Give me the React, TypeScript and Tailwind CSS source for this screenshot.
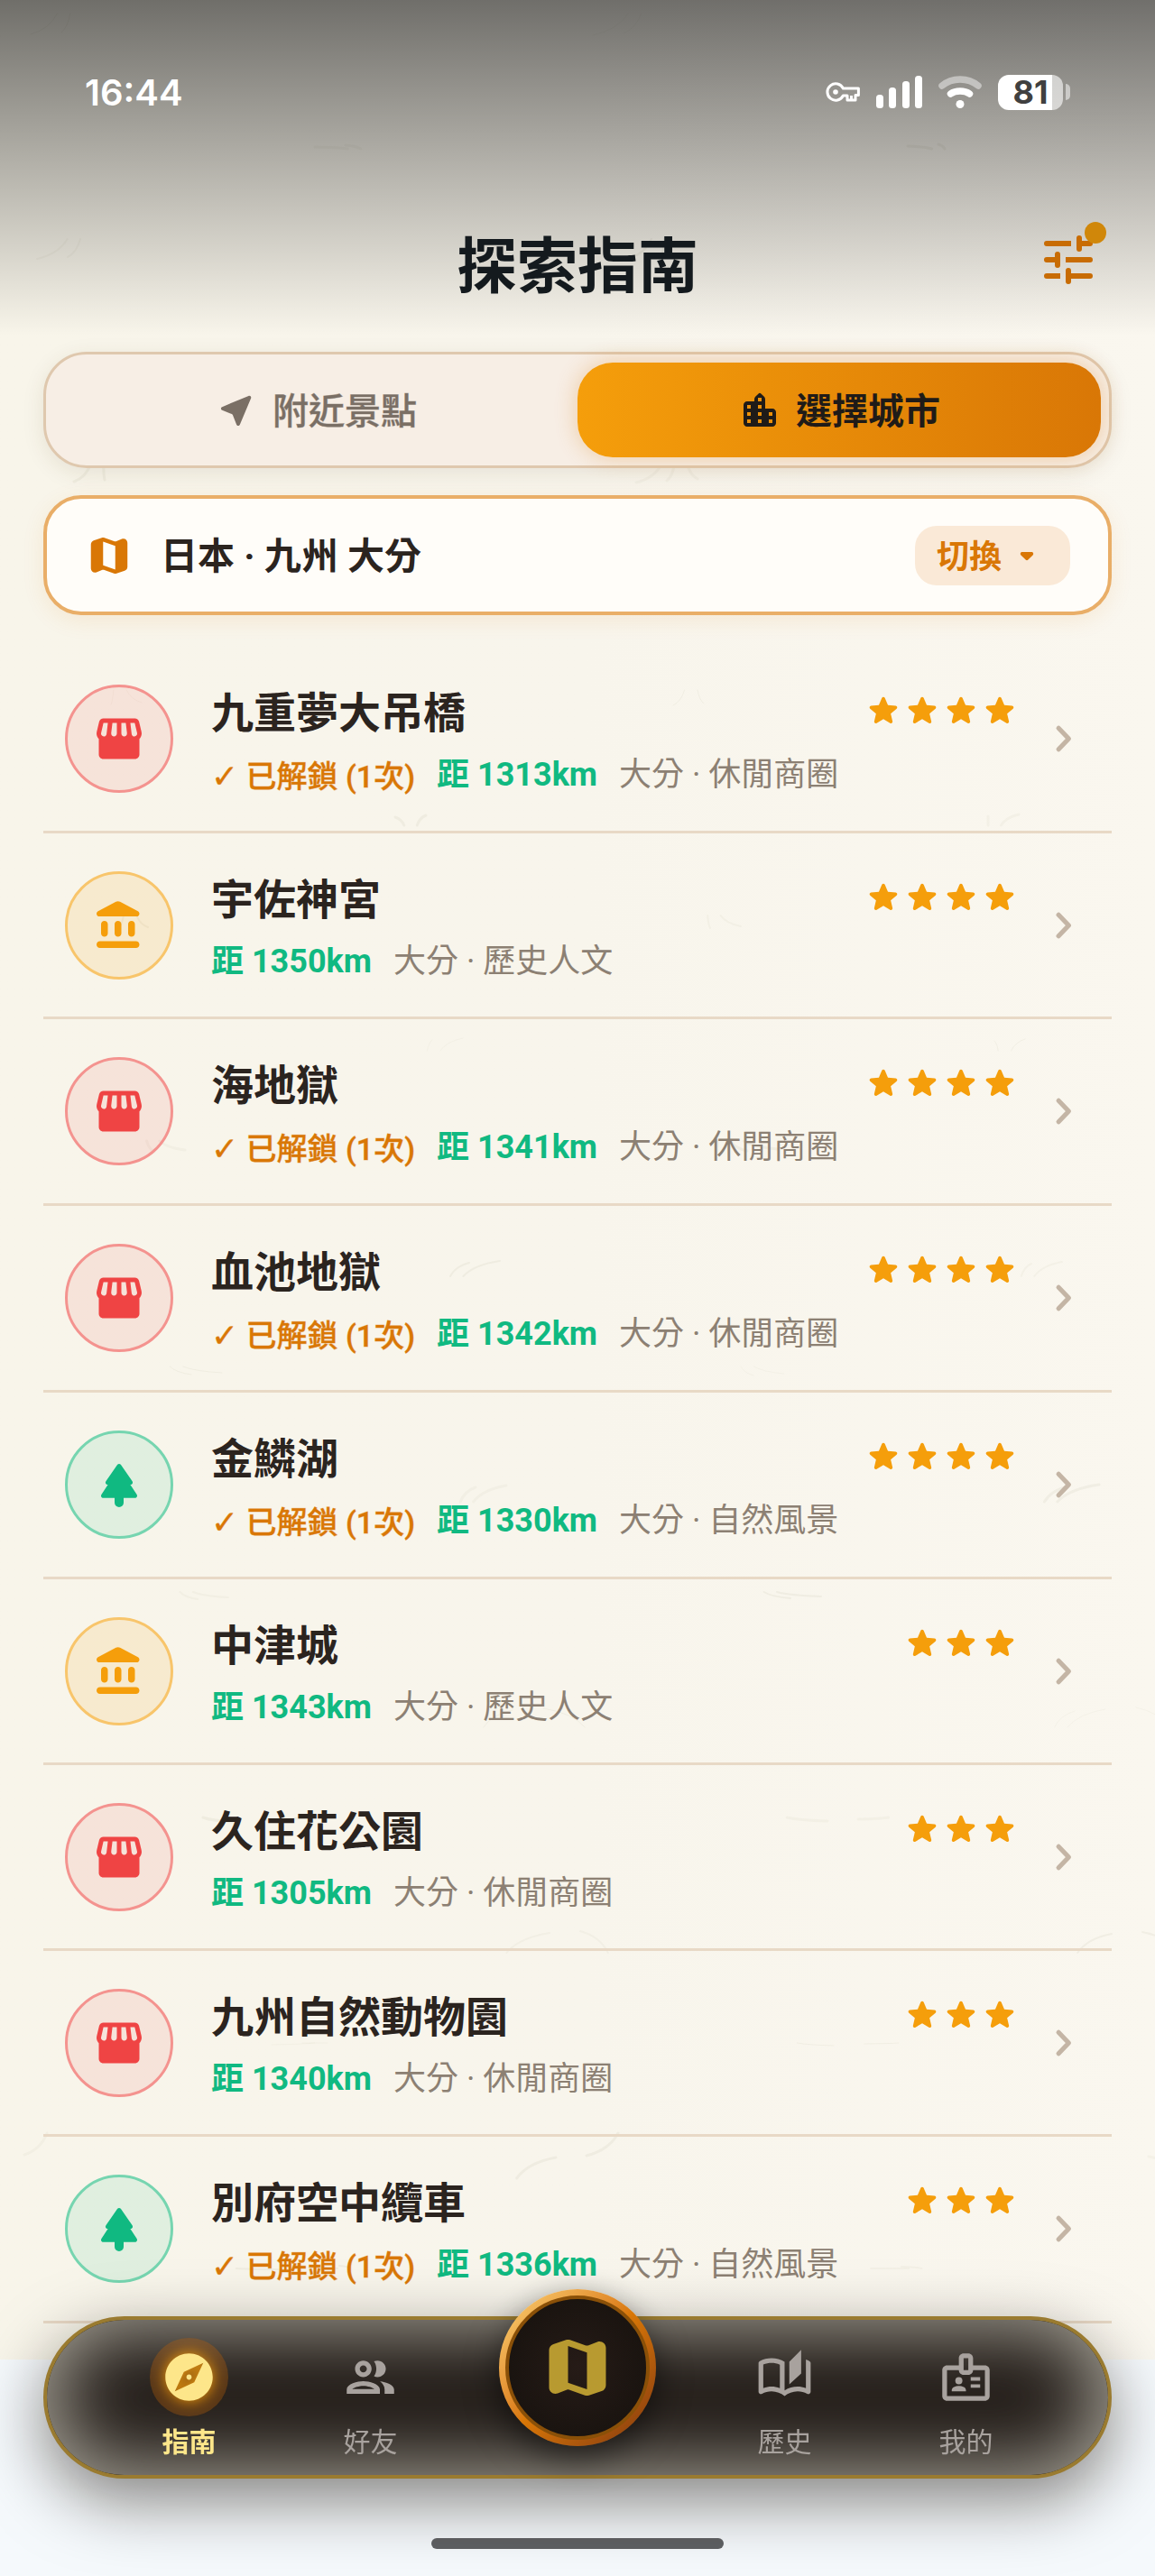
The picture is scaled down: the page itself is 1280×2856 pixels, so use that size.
import { useState, type ReactNode } from "react";
import { MdExplore, MdOutlineAutoStories, MdOutlineBadge } from "react-icons/md";

type Category = "shop" | "culture" | "nature";

interface Spot {
    name: string;
    category: Category;
    distance: number;
    stars: number;
    unlocked?: boolean;
}

const spots: Spot[] = [
    { name: "九重夢大吊橋", category: "shop", distance: 1313, stars: 4, unlocked: true },
    { name: "宇佐神宮", category: "culture", distance: 1350, stars: 4 },
    { name: "海地獄", category: "shop", distance: 1341, stars: 4, unlocked: true },
    { name: "血池地獄", category: "shop", distance: 1342, stars: 4, unlocked: true },
    { name: "金鱗湖", category: "nature", distance: 1330, stars: 4, unlocked: true },
    { name: "中津城", category: "culture", distance: 1343, stars: 3 },
    { name: "久住花公園", category: "shop", distance: 1305, stars: 3 },
    { name: "九州自然動物園", category: "shop", distance: 1340, stars: 3 },
    { name: "別府空中纜車", category: "nature", distance: 1336, stars: 3, unlocked: true },
];

const paths = {
    nearMe: "M18.75 3.94L4.07 10.08c-.83.35-.81 1.53.02 1.85L9.43 14c.26.1.47.3.57.57l2.06 5.33c.32.84 1.51.86 1.86.03l6.15-14.67c.33-.83-.5-1.66-1.32-1.32z",
    city: "M15 11V5.83c0-.53-.21-1.04-.59-1.41L12.7 2.71c-.39-.39-1.02-.39-1.41 0l-1.7 1.7C9.21 4.79 9 5.3 9 5.83V7H5c-1.1 0-2 .9-2 2v10c0 1.1.9 2 2 2h14c1.1 0 2-.9 2-2v-6c0-1.1-.9-2-2-2h-4zm-8 8H5v-2h2v2zm0-4H5v-2h2v2zm0-4H5V9h2v2zm6 8h-2v-2h2v2zm0-4h-2v-2h2v2zm0-4h-2V9h2v2zm0-4h-2V5h2v2zm6 12h-2v-2h2v2zm0-4h-2v-2h2v2z",
    map: "M14.65 4.98l-5-1.75c-.42-.15-.88-.15-1.3-.01L4.36 4.56C3.55 4.84 3 5.6 3 6.46v11.85c0 1.41 1.41 2.37 2.72 1.86l2.93-1.14c.22-.09.47-.09.69-.01l5 1.75c.42.15.88.15 1.3.01l3.99-1.34c.81-.27 1.36-1.04 1.36-1.9V5.69c0-1.41-1.41-2.37-2.72-1.86l-2.93 1.14c-.22.08-.46.09-.69.01zM15 18.89l-6-2.11V5.11l6 2.11v11.67z",
    shop: "M21.9 8.89l-1.05-4.37c-.22-.9-1-1.52-1.91-1.52H5.05c-.9 0-1.69.63-1.9 1.52L2.1 8.89c-.24 1.02-.02 2.06.62 2.88.08.11.19.19.28.29V19c0 1.1.9 2 2 2h14c1.1 0 2-.9 2-2v-6.94c.09-.09.2-.18.28-.28.64-.82.87-1.87.62-2.89zM18.91 4.99l1.05 4.37c.1.42.01.84-.25 1.17-.14.18-.44.47-.94.47-.61 0-1.14-.49-1.21-1.14L16.98 5l1.93-.01zM13 5h1.96l.54 4.52c.05.39-.07.78-.33 1.07-.22.26-.54.41-.95.41-.67 0-1.22-.59-1.22-1.31V5zM8.49 9.52L9.04 5H11v4.69c0 .72-.55 1.31-1.29 1.31-.34 0-.65-.15-.89-.41-.25-.29-.37-.68-.33-1.07zM4.04 9.36L5.05 5h1.97l-.58 4.86c-.08.65-.6 1.14-1.21 1.14-.49 0-.8-.29-.93-.47-.27-.32-.36-.75-.26-1.17z",
    culture: "M4 11.5v4c0 .83.67 1.5 1.5 1.5S7 16.33 7 15.5v-4c0-.83-.67-1.5-1.5-1.5S4 10.67 4 11.5zm6 0v4c0 .83.67 1.5 1.5 1.5s1.5-.67 1.5-1.5v-4c0-.83-.67-1.5-1.5-1.5s-1.5.67-1.5 1.5zM3.5 22h16c.83 0 1.5-.67 1.5-1.5s-.67-1.5-1.5-1.5h-16c-.83 0-1.5.67-1.5 1.5S2.67 22 3.5 22zM16 11.5v4c0 .83.67 1.5 1.5 1.5s1.5-.67 1.5-1.5v-4c0-.83-.67-1.5-1.5-1.5s-1.5.67-1.5 1.5zM10.57 1.49l-7.9 4.16c-.41.21-.67.64-.67 1.1C2 7.44 2.56 8 3.25 8h16.51C20.44 8 21 7.44 21 6.75c0-.46-.26-.89-.67-1.1l-7.9-4.16c-.58-.31-1.28-.31-1.86 0z",
    nature: "M11.2 3.2c.4-.58 1.2-.58 1.6 0l5.05 7.25c.45.65 0 1.5-.8 1.5h-.1l2.9 4.4c.42.65-.03 1.5-.8 1.5H14v2.15a2 2 0 0 1-4 0v-2.15H4.95c-.77 0-1.22-.85-.8-1.5l2.9-4.4h-.1c-.8 0-1.25-.85-.8-1.5z",
    star: "M12 17.8l4.7 2.9c.86.53 1.92-.24 1.7-1.22l-1.27-5.36 4.16-3.6c.76-.66.35-1.9-.65-1.99l-5.47-.46-2.14-5.05c-.39-.92-1.69-.92-2.08 0L8.81 8.06l-5.47.46c-1 .08-1.41 1.33-.65 1.99l4.16 3.6-1.25 5.36c-.23.98.83 1.75 1.69 1.22z",
    arrowDown: "M8.71 11.71l2.59 2.59c.39.39 1.02.39 1.41 0l2.59-2.59c.63-.63.18-1.71-.71-1.71H9.41c-.89 0-1.33 1.08-.7 1.71z",
    friends: "M9 13.75c-2.34 0-7 1.17-7 3.5V19h14v-1.75c0-2.33-4.66-3.5-7-3.5zM4.34 17c.84-.58 2.87-1.25 4.66-1.25s3.82.67 4.66 1.25H4.34zM9 12c1.93 0 3.5-1.57 3.5-3.5S10.93 5 9 5 5.5 6.57 5.5 8.5 7.07 12 9 12zm0-5c.83 0 1.5.67 1.5 1.5S9.83 10 9 10s-1.5-.67-1.5-1.5S8.17 7 9 7zm7.04 6.81c1.16.84 1.96 1.96 1.96 3.44V19h4v-1.75c0-2.02-3.5-3.17-5.96-3.44zM15 12c1.93 0 3.5-1.57 3.5-3.5S16.93 5 15 5c-.54 0-1.04.13-1.5.35.63.89 1 1.98 1 3.15s-.37 2.26-1 3.15c.46.22.96.35 1.5.35z",
};

const categories: Record<Category, { label: string; circle: string }> = {
    shop: { label: "休閒商圈", circle: "border-[#f4938f] bg-[#ef4444]/10 text-[#ef4444]" },
    culture: { label: "歷史人文", circle: "border-[#f8c56b] bg-[#f59e0b]/12 text-[#f59e0b]" },
    nature: { label: "自然風景", circle: "border-[#76d5b0] bg-[#10b981]/10 text-[#10b981]" },
};

function Icon({ d, className }: { d: string; className: string }) {
    return (
        <svg viewBox="0 0 24 24" fill="currentColor" fillRule="evenodd" className={className} aria-hidden="true">
            <path d={d} />
        </svg>
    );
}

// Faint fibres scattered over the paper background
const fibres = Array.from({ length: 90 }, (_, i) => {
    const x = (i * 397) % 1280;
    const y = (i * 619 + 40) % 2600;
    const dx = ((i * 53) % 70) - 35;
    const dy = ((i * 31) % 50) - 25;
    return `M${x} ${y}q${dx} ${dy / 4} ${dx * 1.4} ${dy}`;
});

function Paper() {
    return (
        <div className="absolute inset-0 overflow-hidden bg-linear-to-r from-[#f8f5ea] via-[#f8f5ec] to-[#faf7ef]" aria-hidden="true">
            <svg className="h-full w-full" viewBox="0 0 1280 2616" preserveAspectRatio="xMidYMin slice" fill="none" stroke="#8f8668" strokeLinecap="round">
                {fibres.map((d, i) => (
                    <path key={d} d={d} strokeWidth={1 + (i % 3)} opacity={i % 2 ? 0.05 : 0.08} />
                ))}
            </svg>
            <div className="absolute inset-x-0 top-0 h-[372px] bg-linear-to-b from-black/55 via-black/25 via-54% to-transparent" />
        </div>
    );
}

function StatusBar() {
    return (
        <div className="flex h-[204px] items-center justify-between pr-[94px] pl-[94px] text-white">
            <time className="pt-0.5 font-['Inter',sans-serif] text-[40px] font-semibold">16:44</time>
            <div className="flex items-center gap-[18px]">
                <svg className="h-6 w-[38px]" viewBox="0 0 38 24" fill="none" stroke="currentColor" strokeWidth="3" aria-hidden="true">
                    <path d="M19.4 8H36.4V15.5H33V21H24V16H19.4A9.2 9.2 0 1 1 19.4 8z" strokeLinejoin="round" />
                    <path d="M28.5 16v5" />
                    <circle cx="11" cy="12" r="2.8" fill="currentColor" stroke="none" />
                </svg>
                <svg className="h-9 w-[51px]" viewBox="0 0 51 36" fill="currentColor" aria-hidden="true">
                    <rect y="21" width="8" height="15" rx="3.5" />
                    <rect x="14" y="13" width="8" height="23" rx="3.5" />
                    <rect x="29" y="6" width="8" height="30" rx="3.5" />
                    <rect x="43" width="8" height="36" rx="3.5" />
                </svg>
                <svg className="h-9 w-12" viewBox="0 0 48 36" fill="none" stroke="currentColor" strokeWidth="7.5" strokeLinecap="round" aria-hidden="true">
                    <path d="M4 11C15 1.5 33 1.5 44 11" opacity=".45" />
                    <path d="M13.5 20C19 16 29 16 34.5 20" />
                    <circle cx="24" cy="31.5" r="4.5" fill="currentColor" stroke="none" />
                </svg>
                <div className="flex items-center gap-[3px]">
                    <div className="flex h-[39px] w-[72px] items-center justify-center rounded-xl bg-linear-to-r from-white from-83% to-white/60 to-83% font-['Inter',sans-serif] text-[36px] leading-none font-bold text-[#404040]">
                        81
                    </div>
                    <div className="h-[18px] w-[5px] rounded-r-md bg-white/50" />
                </div>
            </div>
        </div>
    );
}

function Header() {
    return (
        <header className="grid h-[180px] grid-cols-[1fr_auto_1fr] items-start px-12 pt-12">
            <span />
            <h1 className="text-[67px] leading-[88px] font-bold text-[#141a1e]">探索指南</h1>
            <button type="button" aria-label="篩選" className="relative mr-3 justify-self-end text-[#c86c04]">
                <svg className="size-[72px]" viewBox="0 0 24 24" fill="none" stroke="currentColor" strokeWidth="2" aria-hidden="true">
                    <path strokeLinecap="round" d="M4 6h8M16 4v4M17 6h3M4 12h3M8 10v4M13 12h7M4 18h4M12 16v4M13 18h7" />
                    <path d="M10 6h3M11 12h3M6 18h3" />
                </svg>
                <span className="absolute -top-1.5 -right-1.5 size-6 rounded-full bg-[#d0870a]" />
            </button>
        </header>
    );
}

function Tabs() {
    const [tab, setTab] = useState("city");
    const tabs = [
        { id: "nearby", label: "附近景點", icon: paths.nearMe },
        { id: "city", label: "選擇城市", icon: paths.city },
    ];

    return (
        <div role="tablist" className="mt-1.5 flex rounded-[48px] border-3 border-[#dfc8ae] bg-[#f7eee5] p-[9px] shadow-[0_6px_24px_rgba(80,60,20,0.1)]">
            {tabs.map(({ id, label, icon }) => (
                <button
                    key={id}
                    type="button"
                    role="tab"
                    aria-selected={tab === id}
                    onClick={() => setTab(id)}
                    className={
                        tab === id
                            ? "flex h-[105px] flex-1 items-center justify-center gap-4 rounded-[39px] bg-linear-to-r from-[#f59e0b] to-[#d97706] text-[40px] font-bold text-[#1f1b18] shadow-[0_0_24px_rgba(217,119,6,0.3)]"
                            : "flex h-[105px] flex-1 items-center justify-center gap-4 rounded-[39px] text-[40px] font-medium text-[#7a6f65] [-webkit-text-stroke:1px_rgb(122_111_101/0.4)]"
                    }
                >
                    <Icon d={icon} className="size-12" />
                    <span className="pt-1">{label}</span>
                </button>
            ))}
        </div>
    );
}

function CityCard() {
    return (
        <section className="mt-[30px] flex h-[133px] items-center rounded-[42px] border-4 border-[#e9ae68] bg-[#fffdf9] px-[42px] shadow-[0_6px_24px_rgba(217,119,6,0.1)]">
            <Icon d={paths.map} className="size-[54px] text-[#d97706]" />
            <p className="ml-[30px] flex-1 pt-1 text-[41px] font-bold text-[#2b241f]">日本 · 九州 大分</p>
            <button type="button" className="flex h-[66px] items-center gap-1 rounded-3xl bg-[#fae9d7] px-6 text-[36px] font-bold text-[#d97706]">
                <span className="pt-1">切換</span>
                <Icon d={paths.arrowDown} className="size-12" />
            </button>
        </section>
    );
}

function SpotRow({ spot }: { spot: Spot }) {
    const { label, circle } = categories[spot.category];

    return (
        <li className="border-b-3 border-[#e8d9c6]">
            <a href={`#${spot.distance}`} className={`flex items-center px-6 ${spot.unlocked ? "h-51" : "h-[203px]"}`}>
                <span className={`flex size-[120px] shrink-0 items-center justify-center rounded-full border-3 ${circle}`}>
                    <Icon d={paths[spot.category]} className="size-[60px]" />
                </span>
                <div className="ml-[42px] flex-1">
                    <div className="flex items-start justify-between">
                        <h2 className="text-[47px] leading-[68px] font-bold text-[#2b241f]">{spot.name}</h2>
                        <span className="mt-3 flex gap-[5px]" role="img" aria-label={`${spot.stars} 星`}>
                            {Array.from({ length: spot.stars }, (_, i) => (
                                <Icon key={i} d={paths.star} className="size-[38px] text-[#f59e0b]" />
                            ))}
                        </span>
                    </div>
                    <p className="mt-3 flex items-center gap-6 text-[36px] leading-[44px] whitespace-nowrap">
                        {spot.unlocked && (
                            <span className="pt-1 text-[34px] leading-10 font-medium text-[#d97706] [-webkit-text-stroke:1px_rgb(217_119_6/0.4)]">
                                <span className="font-['DejaVu_Sans',sans-serif] text-[36px] font-bold">✓</span> 已解鎖 (1次)
                            </span>
                        )}
                        <span className="font-bold text-[#10b981]">距 {spot.distance}km</span>
                        <span className="text-[#8c8073]">大分 · {label}</span>
                    </p>
                </div>
                <svg className="ml-[27px] size-[54px] text-[#c4b5a5]" viewBox="0 0 24 24" fill="none" stroke="currentColor" strokeWidth="2.3" strokeLinecap="round" strokeLinejoin="round" aria-hidden="true">
                    <path d="M8.5 6.8l5 5.2-5 5.2" />
                </svg>
            </a>
        </li>
    );
}

function NavItem({ label, active, children }: { label: string; active?: boolean; children: ReactNode }) {
    return (
        <a
            href="#nav"
            aria-current={active ? "page" : undefined}
            className={
                active
                    ? "flex flex-1 flex-col items-center text-[30px] leading-9 font-bold text-[#fde68a]"
                    : "flex flex-1 flex-col items-center text-[30px] leading-9 text-[#a8a29e]"
            }
        >
            <span
                className={
                    active
                        ? "flex size-[87px] items-center justify-center rounded-full bg-[#b45f0c]/35"
                        : "flex size-[87px] items-center justify-center"
                }
            >
                {children}
            </span>
            <span className="mt-[11px]">{label}</span>
        </a>
    );
}

function BottomNav() {
    return (
        <div className="fixed inset-x-0 bottom-0 px-12 pb-[30px]">
            <nav className="relative flex h-[180px] items-start rounded-full border-4 border-[#9a7b30] bg-[#231d19] px-[57px] pt-5 shadow-[0_24px_72px_rgba(20,12,4,0.5),inset_0_0_80px_12px_#a39f94]">
                <NavItem label="指南" active>
                    <MdExplore className="size-[63px] drop-shadow-[0_0_8px_#f59e0b]" />
                </NavItem>
                <NavItem label="好友">
                    <Icon d={paths.friends} className="size-[63px]" />
                </NavItem>
                <div className="w-[258px]" />
                <NavItem label="歷史">
                    <MdOutlineAutoStories className="size-[63px]" />
                </NavItem>
                <NavItem label="我的">
                    <MdOutlineBadge className="size-[63px]" />
                </NavItem>
                <button
                    type="button"
                    aria-label="地圖"
                    className="absolute -top-[34px] left-1/2 size-[174px] -translate-x-1/2 rounded-full bg-linear-to-br from-[#fcd575] via-[#d97706] to-[#7f370d] p-[7px] shadow-[0_12px_36px_rgba(0,0,0,0.55)]"
                >
                    <span className="flex size-full items-center justify-center rounded-full border-4 border-[#8a5008] bg-radial from-[#261b17] to-[#15110d]">
                        <Icon d={paths.map} className="size-[84px] text-[#b89a30]" />
                    </span>
                </button>
            </nav>
            <div className="mx-auto mt-[66px] h-3 w-[324px] rounded-full bg-[#5f6164]" />
        </div>
    );
}

export default function App() {
    return (
        <div className="min-h-screen bg-[#f5f9fc] pb-60 font-['Roboto','Noto_Sans_CJK_TC',sans-serif]">
            <div className="relative pb-10">
                <Paper />
                <div className="relative">
                    <StatusBar />
                    <Header />
                    <main className="px-12">
                        <Tabs />
                        <CityCard />
                        <ul className="mt-[35px]">
                            {spots.map((spot) => (
                                <SpotRow key={spot.name} spot={spot} />
                            ))}
                        </ul>
                    </main>
                </div>
            </div>
            <BottomNav />
        </div>
    );
}
